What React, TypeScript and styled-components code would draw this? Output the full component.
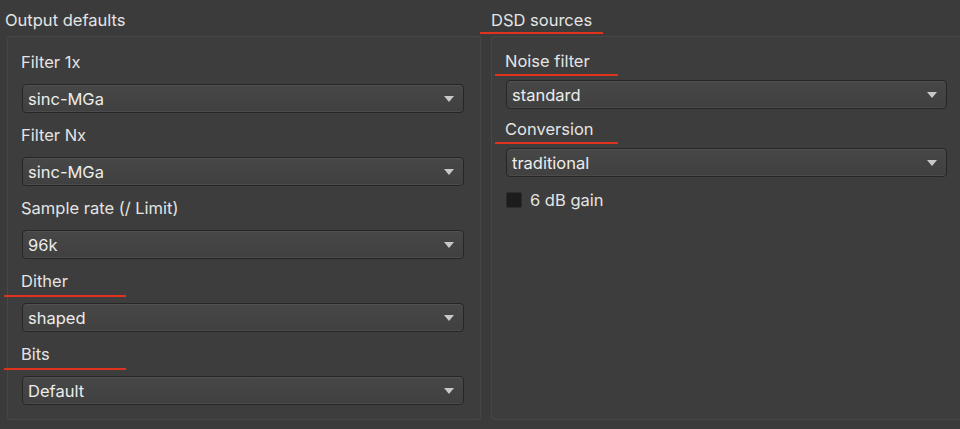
import React from "react";
import styled, { createGlobalStyle, css } from "styled-components";

const Global = createGlobalStyle`
  html, body { margin: 0; padding: 0; background: #3b3b3b; }
  body { font-family: Inter, "Noto Sans", sans-serif; color: #e4e4e4; overflow: hidden; }
`;

const Page = styled.div`
  display: flex;
  gap: 10px;
  width: 964px;
  height: 429px;
  overflow: hidden;
`;

const Column = styled.div<{ $width?: number }>`
  display: flex;
  flex-direction: column;
  ${(p) => (p.$width ? css`width: ${p.$width}px; flex: none;` : css`flex: 1;`)}
`;

const Title = styled.div<{ $indent: number }>`
  position: relative;
  height: 36px;
  line-height: 40px;
  font-size: 16.5px;
  padding-left: ${(p) => p.$indent}px;
  box-sizing: border-box;
`;

const Panel = styled.div<{ $pad: number }>`
  margin-left: ${(p) => p.$pad}px;
  height: 384px;
  box-sizing: border-box;
  border: 1px solid #474747;
  border-radius: 3px;
  background: #3d3d3d;
  padding: 0 16px 0 13px;
  display: flex;
  flex-direction: column;
`;

const Mark = styled.span<{ $left: number; $width: number; $top: number }>`
  position: absolute;
  left: ${(p) => p.$left}px;
  top: ${(p) => p.$top}px;
  width: ${(p) => p.$width}px;
  height: 2px;
  background: #e0331d;
`;

const Label = styled.div<{ $top: number }>`
  position: relative;
  font-size: 16.5px;
  height: 20px;
  line-height: 20px;
  margin-top: ${(p) => p.$top}px;
`;

const Select = styled.div<{ $top: number }>`
  margin-top: ${(p) => p.$top}px;
  margin-left: 1px;
  height: 29px;
  box-sizing: border-box;
  border: 1px solid #262626;
  border-radius: 4px;
  background: linear-gradient(#474747, #404040);
  box-shadow: inset 0 1px 0 rgba(255, 255, 255, 0.05), inset 0 -1px 0 rgba(255, 255, 255, 0.06);
  display: flex;
  align-items: center;
  justify-content: space-between;
  padding: 0 9px 0 5px;
  font-size: 16.5px;
  color: #ececec;
`;

const Arrow = styled.span`
  width: 0;
  height: 0;
  border-left: 5px solid transparent;
  border-right: 5px solid transparent;
  border-top: 6px solid #c8c8c8;
  margin-top: 1px;
`;

const CheckRow = styled.label`
  display: flex;
  align-items: center;
  gap: 8px;
  margin-top: 13px;
  margin-left: 1px;
  font-size: 16.5px;
`;

const Box = styled.span`
  width: 16px;
  height: 16px;
  box-sizing: border-box;
  background: #1c1c1c;
  border: 1px solid #2c2c2c;
  border-radius: 2px;
`;

type Field = { label: string; value: string; mark?: { left: number; width: number } };

const leftFields: Field[] = [
  { label: "Filter 1x", value: "sinc-MGa" },
  { label: "Filter Nx", value: "sinc-MGa" },
  { label: "Sample rate (/ Limit)", value: "96k" },
  { label: "Dither", value: "shaped", mark: { left: -17, width: 122 } },
  { label: "Bits", value: "Default", mark: { left: -17, width: 122 } },
];

const rightFields: Field[] = [
  { label: "Noise filter", value: "standard", mark: { left: -10, width: 123 } },
  { label: "Conversion", value: "traditional", mark: { left: -10, width: 123 } },
];

export default function App() {
  return (
    <>
      <Global />
      <Page>
        <Column $width={481}>
          <Title $indent={5}>Output defaults</Title>
          <Panel $pad={7}>
            {leftFields.map((f, i) => (
              <React.Fragment key={f.label}>
                <Label $top={i === 0 ? 15 : 12}>
                  {f.label}
                  {f.mark && <Mark $left={f.mark.left} $top={24} $width={f.mark.width} />}
                </Label>
                <Select $top={12}>
                  {f.value}
                  <Arrow />
                </Select>
              </React.Fragment>
            ))}
          </Panel>
        </Column>
        <Column>
          <Title $indent={-2}>
            DSD sources
            <Mark $left={-11} $top={32} $width={123} />
          </Title>
          <Panel $pad={0}>
            {rightFields.map((f, i) => (
              <React.Fragment key={f.label}>
                <Label $top={i === 0 ? 14 : 10}>
                  {f.label}
                  {f.mark && <Mark $left={f.mark.left} $top={23} $width={f.mark.width} />}
                </Label>
                <Select $top={9}>
                  {f.value}
                  <Arrow />
                </Select>
              </React.Fragment>
            ))}
            <CheckRow>
              <Box />6 dB gain
            </CheckRow>
          </Panel>
        </Column>
      </Page>
    </>
  );
}
